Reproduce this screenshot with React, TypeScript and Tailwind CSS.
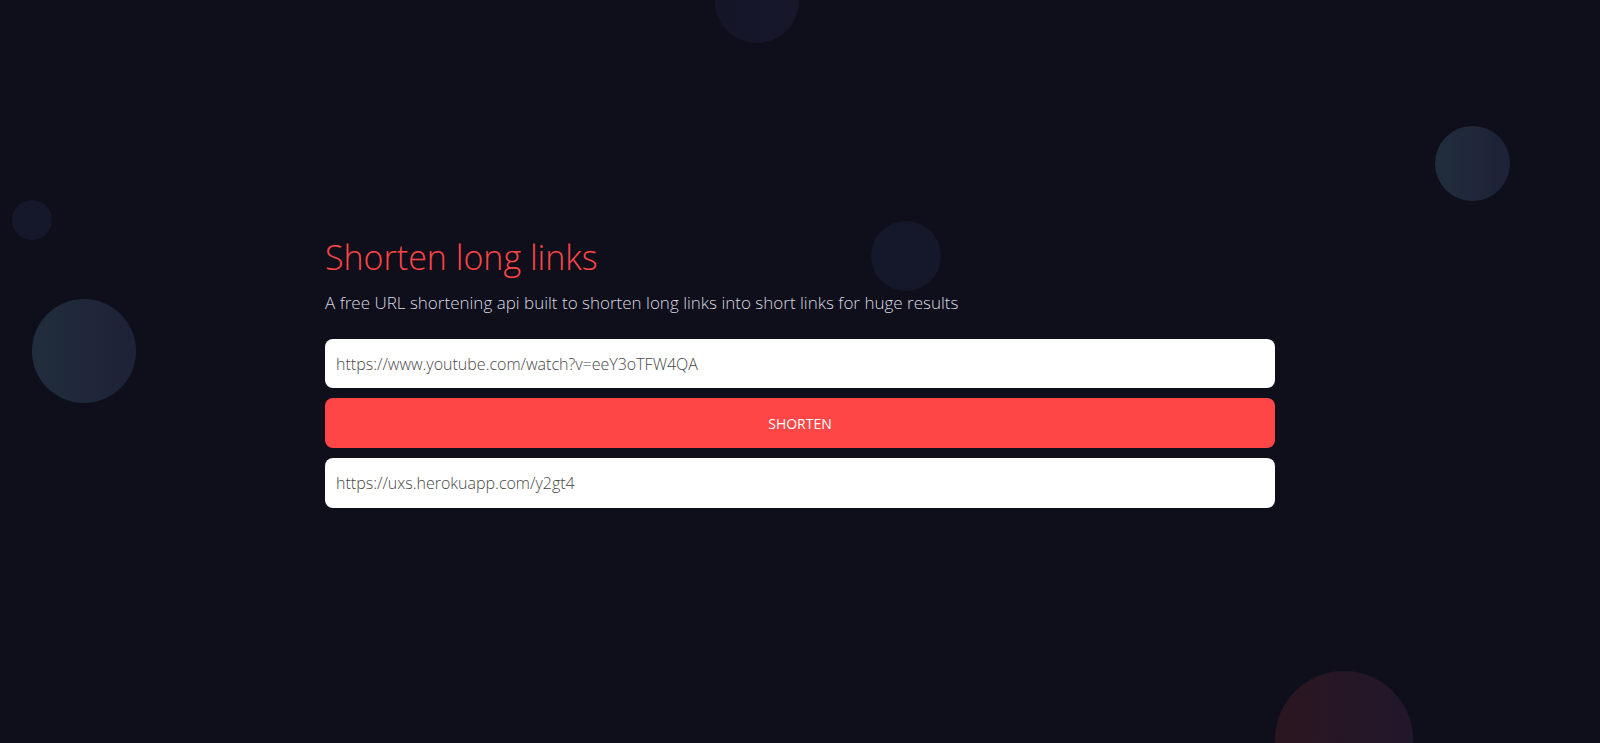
import React from "react";

const font = { fontFamily: '"Open Sans", "Noto Sans", sans-serif' };

export default function App() {
  return (
    <div className="relative h-[743px] w-full overflow-hidden bg-[#0f0f1b]" style={font}>
      {/* decorative background circles */}
      <div className="absolute left-[715px] top-[-41px] h-[84px] w-[84px] rounded-full bg-gradient-to-r from-[#141527] to-[#16172b]" />
      <div className="absolute left-[871px] top-[221px] h-[70px] w-[70px] rounded-full bg-[#15172a]" />
      <div className="absolute left-[12px] top-[200px] h-[40px] w-[40px] rounded-full bg-[#15172a]" />
      <div className="absolute left-[32px] top-[299px] h-[104px] w-[104px] rounded-full bg-gradient-to-r from-[#212d3d] to-[#1d2236]" />
      <div className="absolute left-[1435px] top-[126px] h-[75px] w-[75px] rounded-full bg-gradient-to-r from-[#212d3d] to-[#1d2236]" />
      <div className="absolute left-[1275px] top-[671px] h-[138px] w-[138px] rounded-full bg-gradient-to-r from-[#2b1620] to-[#21172b]" />

      <div className="relative mx-auto flex w-[950px] flex-col pt-[235px]">
        <h1 className="text-[34px] font-light leading-[44px] text-[#ff4646]">Shorten long links</h1>
        <p className="mt-[12px] text-[17px] font-light leading-[24px] text-[#d8d8e0]">
          A free URL shortening api built to shorten long links into short links for huge results
        </p>
        <div className="mt-[24px] flex flex-col gap-[10px]">
          <input
            readOnly
            value="https://www.youtube.com/watch?v=eeY3oTFW4QA"
            className="h-[49px] w-full rounded-[8px] bg-white px-[11px] text-[16px] font-light text-[#474747] outline-none"
            style={font}
          />
          <button className="h-[50px] w-full rounded-[8px] bg-[#ff4646] text-[14px] text-white" style={font}>
            SHORTEN
          </button>
          <input
            readOnly
            value="https://uxs.herokuapp.com/y2gt4"
            className="h-[50px] w-full rounded-[8px] bg-white px-[11px] text-[16px] font-light text-[#474747] outline-none"
            style={font}
          />
        </div>
      </div>
    </div>
  );
}
